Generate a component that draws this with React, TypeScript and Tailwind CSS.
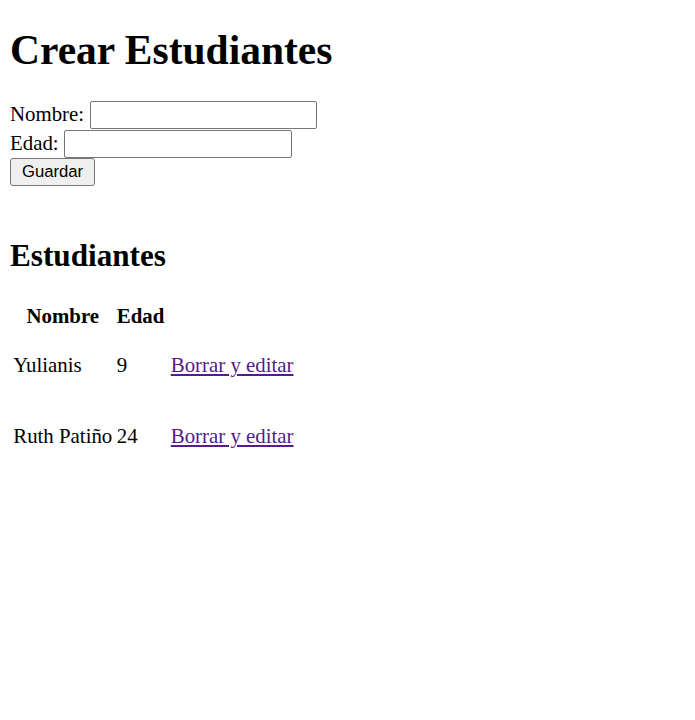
export default function App() {
  const rows = [
    { nombre: "Yulianis", edad: "9" },
    { nombre: "Ruth Patiño", edad: "24" },
  ];
  return (
    <div className="min-h-[720px] bg-white px-[10px] pt-[27px] font-['Liberation_Serif',serif] text-[20.85px] text-black">
      <h1 className="m-0 text-[41.5px] font-bold leading-[46px]">Crear Estudiantes</h1>
      <form className="mt-[27px]">
        <div className="flex h-[29px] items-center">
          <span className="mr-[6px] leading-[23px]">Nombre:</span>
          <input
            type="text"
            className="h-[28px] w-[227px] rounded-[2px] border border-[#767676] bg-white px-[3px] font-['Liberation_Sans',sans-serif] text-[16.67px] outline-none"
          />
        </div>
        <div className="flex h-[29px] items-center">
          <span className="mr-[5px] leading-[23px]">Edad:</span>
          <input
            type="text"
            className="h-[28px] w-[228px] rounded-[2px] border border-[#767676] bg-white px-[3px] font-['Liberation_Sans',sans-serif] text-[16.67px] outline-none"
          />
        </div>
        <button
          type="button"
          className="flex h-[28px] w-[85px] items-center justify-center rounded-[3px] border border-[#767676] bg-[#efefef] font-['Liberation_Sans',sans-serif] text-[16.67px] leading-none text-black"
        >
          Guardar
        </button>
      </form>
      <h2 className="m-0 mt-[53px] text-[31.2px] font-bold leading-[34px]">Estudiantes</h2>
      <table className="mt-[19px] border-separate border-spacing-[2.5px]">
        <thead>
          <tr className="h-[35px]">
            <th className="px-[1.25px] pb-0 pt-[8px] text-center align-middle font-bold leading-[24px]">Nombre</th>
            <th className="px-[1.25px] pb-0 pt-[8px] text-center align-middle font-bold leading-[24px]">Edad</th>
            <th className="px-[1.25px] py-0 leading-[24px]"></th>
          </tr>
        </thead>
        <tbody>
          {rows.map((r) => (
            <tr key={r.nombre} className="h-[69px]">
              <td className="px-[1.25px] py-0 text-left align-middle">{r.nombre}</td>
              <td className="px-[1.25px] py-0 text-left align-middle">{r.edad}</td>
              <td className="pl-[1.25px] pr-[1.25px] py-0 align-middle">
                <a href="#" className="ml-[2px] text-[#551a8b] underline">
                  Borrar y editar
                </a>
              </td>
            </tr>
          ))}
        </tbody>
      </table>
    </div>
  );
}
